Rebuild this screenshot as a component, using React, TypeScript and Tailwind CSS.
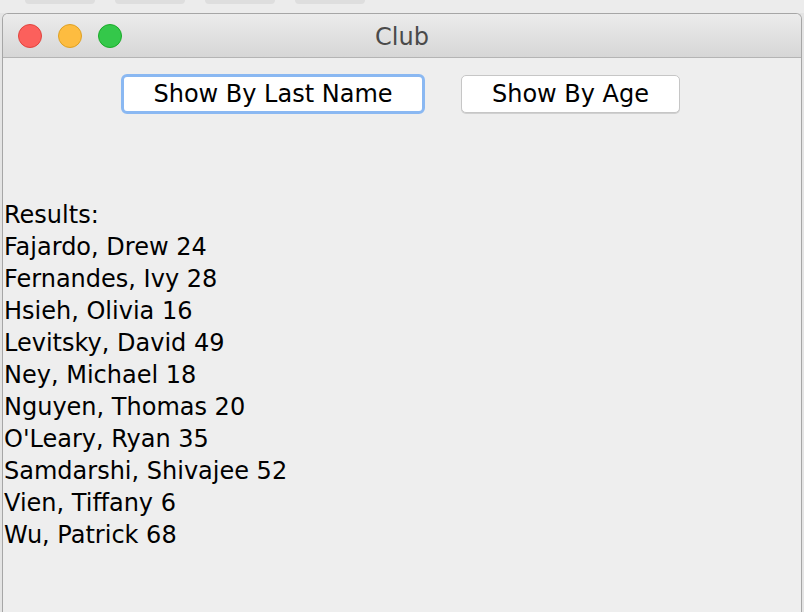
const people = [
  "Fajardo, Drew 24",
  "Fernandes, Ivy 28",
  "Hsieh, Olivia 16",
  "Levitsky, David 49",
  "Ney, Michael 18",
  "Nguyen, Thomas 20",
  "O'Leary, Ryan 35",
  "Samdarshi, Shivajee 52",
  "Vien, Tiffany 6",
  "Wu, Patrick 68",
];

const font = { fontFamily: '"DejaVu Sans", "Liberation Sans", sans-serif' };

const TrafficLights = () => (
  <div className="flex items-center gap-4 pl-[15px]">
    <span className="h-6 w-6 rounded-full border border-[#e0443e] bg-[#fc605c]" />
    <span className="h-6 w-6 rounded-full border border-[#dea123] bg-[#fdbc40]" />
    <span className="h-6 w-6 rounded-full border border-[#1aab29] bg-[#34c84a]" />
  </div>
);

export default function App() {
  return (
    <div className="flex h-[612px] w-[804px] flex-col overflow-hidden bg-[#e4e4e4]" style={font}>
      {/* tabs of the window behind */}
      <div className="flex h-[13px] shrink-0 gap-5 bg-[#ececec] pl-[25px]">
        <div className="h-[4px] w-[70px] rounded-b-md bg-[#dedede]" />
        <div className="h-[4px] w-[70px] rounded-b-md bg-[#dedede]" />
        <div className="h-[4px] w-[70px] rounded-b-md bg-[#dedede]" />
        <div className="h-[4px] w-[70px] rounded-b-md bg-[#dedede]" />
      </div>

      <div className="ml-[2px] mr-[2px] flex flex-1 flex-col overflow-hidden rounded-t-[6px] border-x border-t border-[#a6a6a6] bg-[#eeeeee]">
        {/* title bar */}
        <div className="relative flex h-[44px] shrink-0 items-center border-b border-[#b4b4b4] bg-gradient-to-b from-[#ececec] to-[#d6d6d6]">
          <TrafficLights />
          <div className="absolute inset-0 flex items-center justify-center pt-[3px] text-[24px] text-[#4a4a4a]">
            Club
          </div>
        </div>

        {/* buttons */}
        <div className="flex justify-center gap-[36px] pr-[3px] pt-[16px]">
          <button className="h-[40px] w-[304px] rounded-[6px] border-[3px] border-[#8ab8f2] bg-white text-[24px] leading-none text-black">
            Show By Last Name
          </button>
          <button className="mt-[1px] h-[38px] w-[219px] rounded-[5px] border border-[#c6c6c6] bg-white text-[24px] leading-none text-black shadow-[0_1px_0_#d0d0d0]">
            Show By Age
          </button>
        </div>

        {/* results */}
        <div className="pl-[1px] pt-[85px] text-[24px] leading-[32px] text-black">
          <div>Results:</div>
          {people.map((p) => (
            <div key={p}>{p}</div>
          ))}
        </div>
      </div>
    </div>
  );
}
